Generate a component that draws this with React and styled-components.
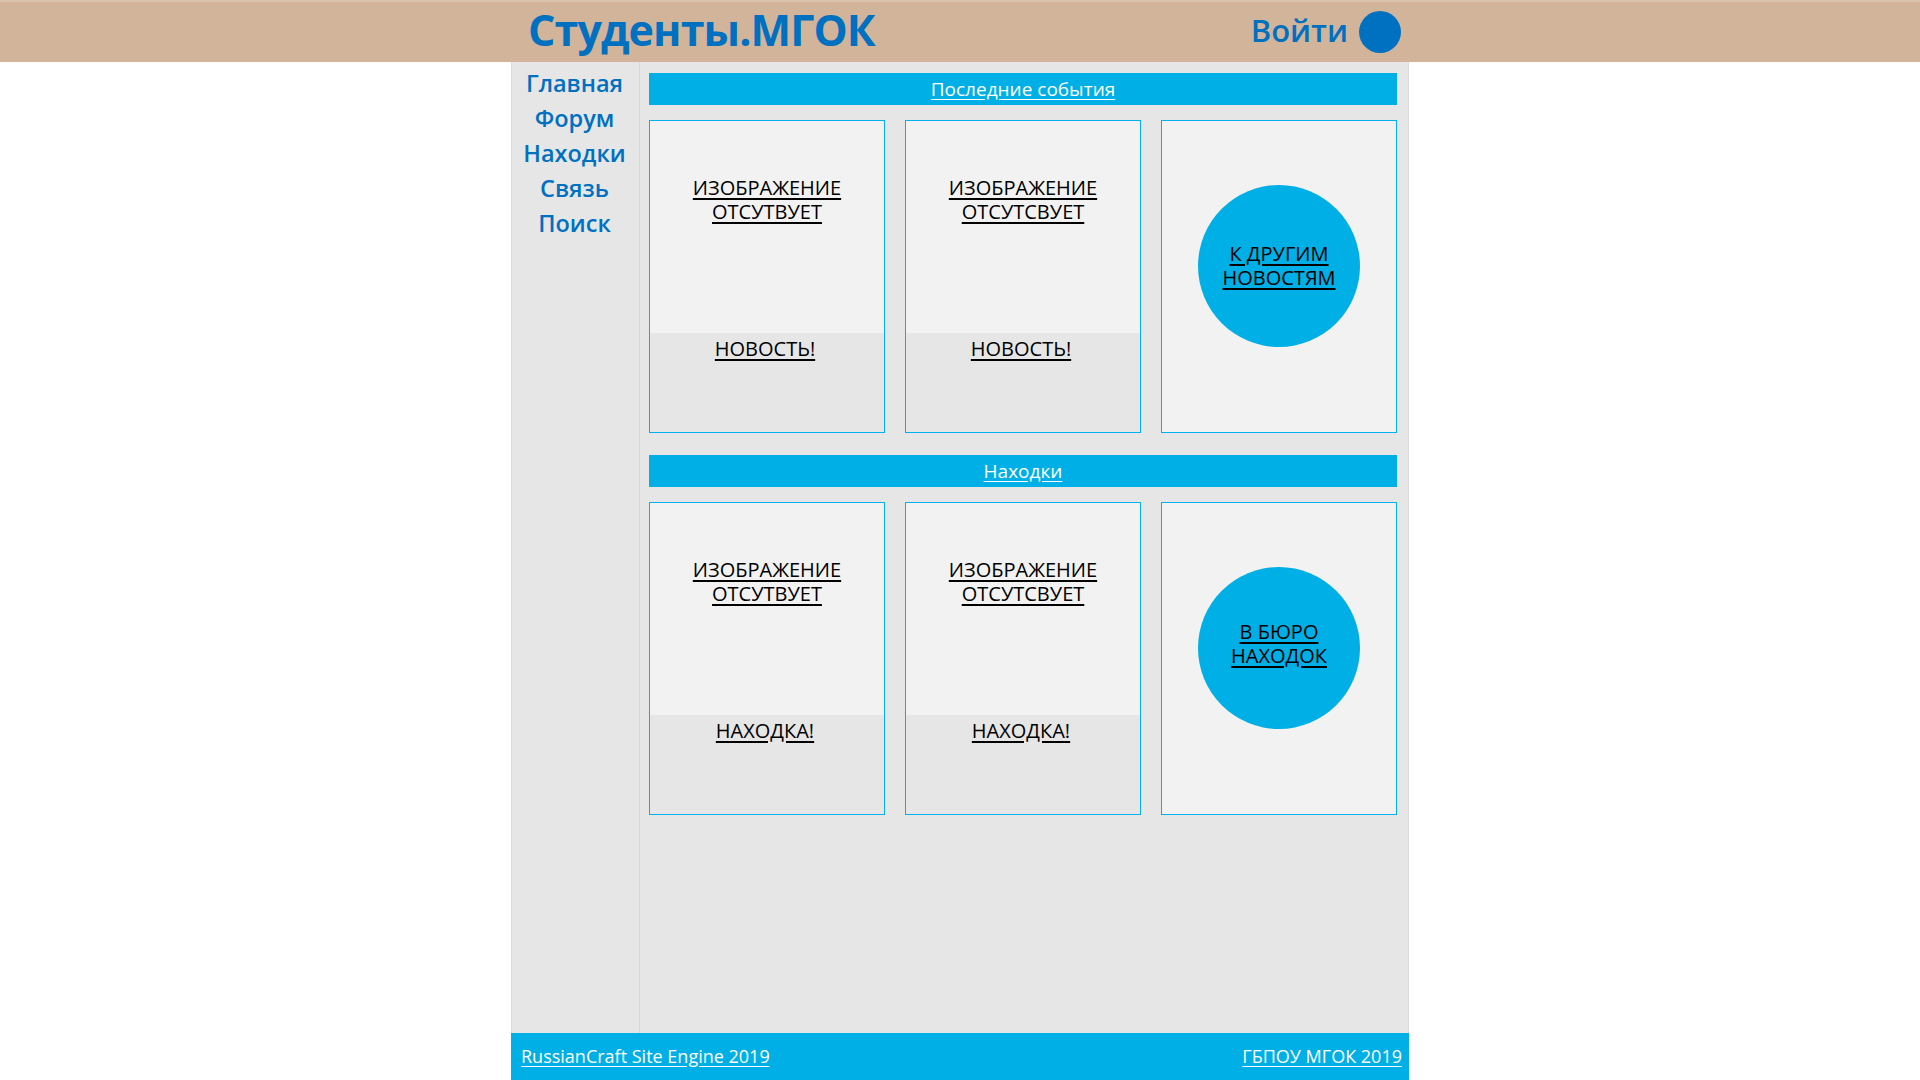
import styled, { createGlobalStyle } from "styled-components";

const GlobalStyle = createGlobalStyle`
  body {
    margin: 0;
    background: #fff;
    font-family: "Open Sans", "Noto Sans", sans-serif;
  }
`;

const Header = styled.header`
  height: 62px;
  background-color: #d2b49b;
  border-top: 2px solid #dcc3ad;
  box-sizing: border-box;
`;

const HeaderInner = styled.div`
  width: 898px;
  height: 100%;
  margin: 0 auto;
  display: flex;
  align-items: center;
  justify-content: space-between;
  padding: 0 8px 0 17px;
  box-sizing: border-box;
`;

const Logo = styled.a`
  font-size: 43px;
  font-weight: 700;
  letter-spacing: -0.9px;
  color: #0070c0;
  text-decoration: none;
  line-height: 1;
  margin-top: -6px;
`;

const Login = styled.div`
  display: flex;
  align-items: center;
  gap: 11px;
`;

const LoginText = styled.span`
  font-size: 31px;
  font-weight: 600;
  color: #0070c0;
  line-height: 1;
  margin-top: -4px;
`;

const Avatar = styled.span`
  width: 42px;
  height: 42px;
  border-radius: 50%;
  background-color: #0070c0;
`;

const Layout = styled.div`
  width: 898px;
  min-height: 971px;
  margin: 0 auto;
  display: grid;
  grid-template-columns: 128px 1fr;
  background-color: #e6e6e6;
  border-left: 1px solid #dcdcdc;
  border-right: 1px solid #dcdcdc;
  box-sizing: border-box;
`;

const Sidebar = styled.nav`
  display: flex;
  flex-direction: column;
  align-items: center;
  padding-top: 4px;
  padding-right: 2px;
  border-right: 1px solid #d6d6d6;
`;

const NavLink = styled.a`
  font-size: 23.5px;
  font-weight: 600;
  line-height: 35px;
  color: #0070c0;
  text-decoration: none;
`;

const Main = styled.main`
  display: flex;
  flex-direction: column;
  gap: 22px;
  padding: 11px 11px 0 9px;
`;

const Section = styled.section`
  display: flex;
  flex-direction: column;
  gap: 15px;
`;

const SectionBar = styled.div`
  height: 32px;
  display: flex;
  align-items: center;
  justify-content: center;
  background-color: #00afe5;
  font-size: 19px;
  color: #fff;
  text-decoration: underline;
  text-underline-offset: 3px;
`;

const CardGrid = styled.div`
  display: grid;
  grid-template-columns: repeat(3, 1fr);
  gap: 20px;
`;

const Card = styled.div`
  height: 313px;
  display: flex;
  flex-direction: column;
  align-items: ${(p) => (p.$center ? "center" : "stretch")};
  justify-content: ${(p) => (p.$center ? "center" : "flex-start")};
  padding-bottom: ${(p) => (p.$center ? "22px" : "0")};
  border: 1px solid #00b0f0;
  background-color: #f2f2f2;
  box-sizing: border-box;
`;

const Label = styled.span`
  font-size: 20px;
  line-height: 24px;
  color: #000;
  text-decoration: underline;
  text-underline-offset: 3px;
  text-align: center;
`;

const ImageArea = styled.div`
  height: 212px;
  display: flex;
  justify-content: center;
  padding-top: 55px;
  box-sizing: border-box;
`;

const Caption = styled.div`
  flex: 1;
  display: flex;
  justify-content: center;
  padding: 4px 4px 0 0;
  background-color: #e6e6e6;
`;

const Bubble = styled.a`
  width: 162px;
  height: 162px;
  border-radius: 50%;
  display: flex;
  align-items: center;
  justify-content: center;
  padding-bottom: ${(p) => p.$lift || 0}px;
  box-sizing: border-box;
  background-color: #00afe5;
  text-decoration: none;
`;

const Footer = styled.footer`
  width: 898px;
  height: 47px;
  margin: 0 auto;
  display: flex;
  align-items: center;
  justify-content: space-between;
  padding: 0 7px 2px 10px;
  background-color: #00afe5;
  box-sizing: border-box;
`;

const FooterLink = styled.a`
  font-size: 18px;
  color: #fff;
  text-decoration: underline;
  text-underline-offset: 3px;
`;

const sections = [
  {
    title: "Последние события",
    cards: [
      { image: ["ИЗОБРАЖЕНИЕ", "ОТСУТВУЕТ"], caption: "НОВОСТЬ!" },
      { image: ["ИЗОБРАЖЕНИЕ", "ОТСУТСВУЕТ"], caption: "НОВОСТЬ!" },
    ],
    more: ["К ДРУГИМ", "НОВОСТЯМ"],
    lift: 0,
  },
  {
    title: "Находки",
    cards: [
      { image: ["ИЗОБРАЖЕНИЕ", "ОТСУТВУЕТ"], caption: "НАХОДКА!" },
      { image: ["ИЗОБРАЖЕНИЕ", "ОТСУТСВУЕТ"], caption: "НАХОДКА!" },
    ],
    more: ["В БЮРО", "НАХОДОК"],
    lift: 8,
  },
];

const navItems = ["Главная", "Форум", "Находки", "Связь", "Поиск"];

function Lines({ lines }) {
  return (
    <Label>
      {lines.map((line, i) => (
        <span key={i}>
          {line}
          {i < lines.length - 1 && <br />}
        </span>
      ))}
    </Label>
  );
}

export default function App() {
  return (
    <>
      <GlobalStyle />
      <Header>
        <HeaderInner>
          <Logo>Студенты.МГОК</Logo>
          <Login>
            <LoginText>Войти</LoginText>
            <Avatar />
          </Login>
        </HeaderInner>
      </Header>
      <Layout>
        <Sidebar>
          {navItems.map((item) => (
            <NavLink key={item}>{item}</NavLink>
          ))}
        </Sidebar>
        <Main>
          {sections.map((section) => (
            <Section key={section.title}>
              <SectionBar>{section.title}</SectionBar>
              <CardGrid>
                {section.cards.map((card, i) => (
                  <Card key={i}>
                    <ImageArea>
                      <Lines lines={card.image} />
                    </ImageArea>
                    <Caption>
                      <Label>{card.caption}</Label>
                    </Caption>
                  </Card>
                ))}
                <Card $center>
                  <Bubble $lift={section.lift}>
                    <Lines lines={section.more} />
                  </Bubble>
                </Card>
              </CardGrid>
            </Section>
          ))}
        </Main>
      </Layout>
      <Footer>
        <FooterLink>RussianCraft Site Engine 2019</FooterLink>
        <FooterLink>ГБПОУ МГОК 2019</FooterLink>
      </Footer>
    </>
  );
}
